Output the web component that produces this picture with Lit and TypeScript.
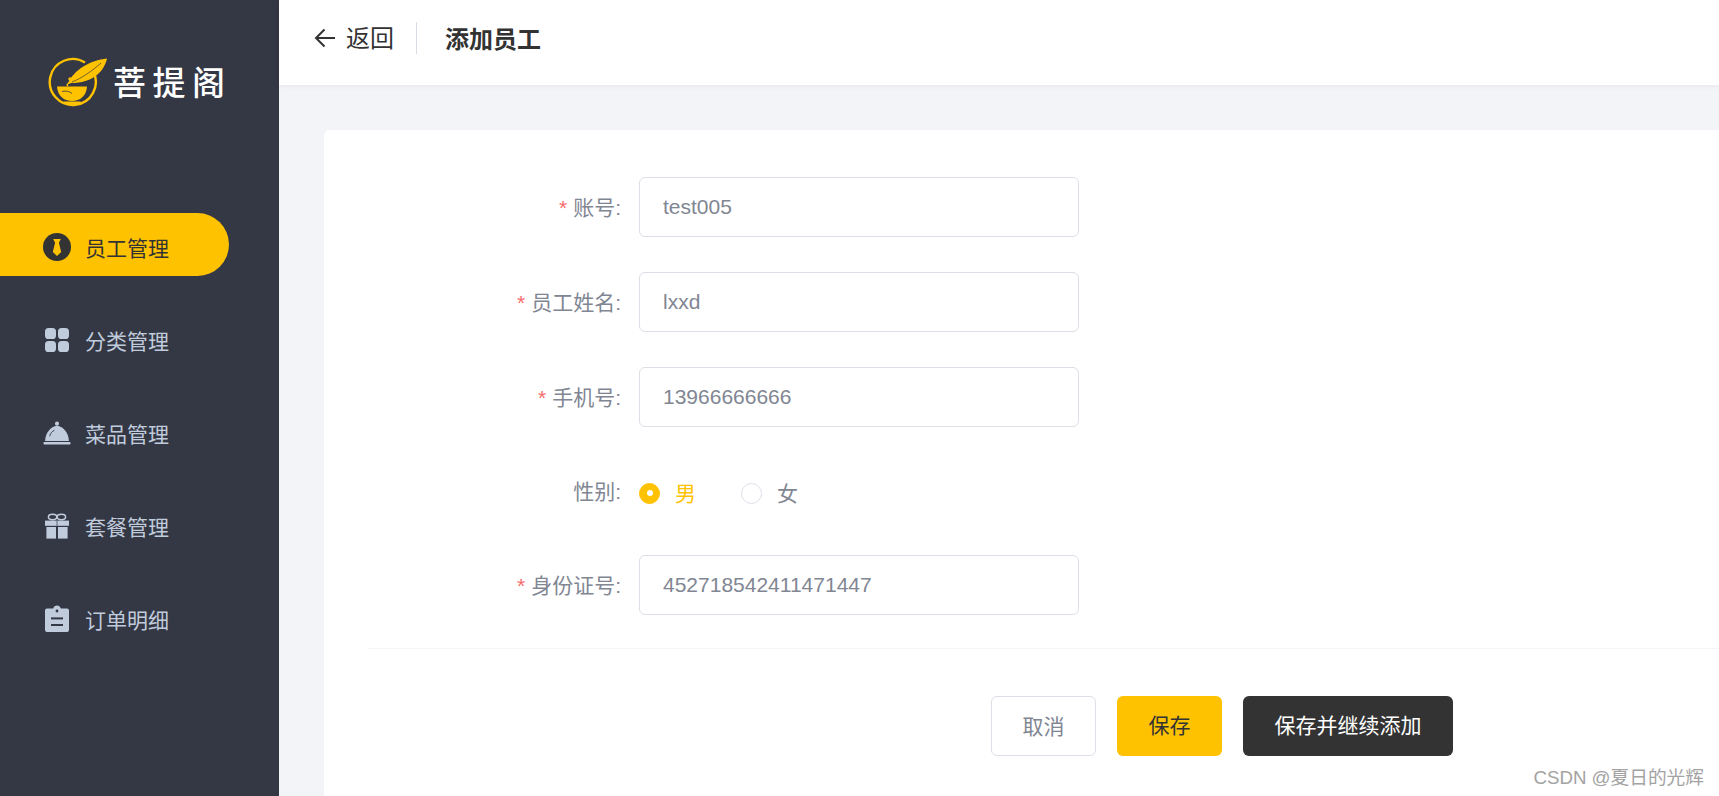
import { LitElement, html, css, svg } from "lit";
import { customElement } from "lit/decorators.js";

const Y = "#ffc200";

const ICONS: Record<string, unknown> = {
  tie: svg`<svg width="28" height="28" viewBox="0 0 28 28"><circle cx="14" cy="14" r="14" fill="#333"/><path d="M10.2 6h7.6l-1.9 3.8 2.3 9.2-4.2 4-4.2-4 2.3-9.2z" fill="${Y}"/></svg>`,
  grid: svg`<svg width="28" height="28" viewBox="0 0 28 28" fill="#c0ccdc"><rect x="2" y="2" width="11" height="11" rx="3.6"/><rect x="15" y="2" width="11" height="11" rx="3.6"/><rect x="2" y="15" width="11" height="11" rx="3.6"/><rect x="15" y="15" width="11" height="11" rx="3.6"/></svg>`,
  cloche: svg`<svg width="30" height="28" viewBox="0 0 30 28" fill="#c0ccdc"><circle cx="15" cy="4" r="2.2"/><path d="M2.2 22.5C2.6 14 8 7 15 6.2 22 7 27.4 14 27.8 22.5z"/><rect x="0.5" y="23.6" width="29" height="2.6" rx="1"/><path d="M7.2 17.5c.6-3 2.6-5.4 5-6.4" fill="none" stroke="#343744" stroke-width="1"/></svg>`,
  gift: svg`<svg width="28" height="28" viewBox="0 0 28 28"><g fill="#c0ccdc"><rect x="2" y="8.6" width="24" height="5.2"/><rect x="3.4" y="15" width="9.6" height="11.6"/><rect x="15" y="15" width="9.6" height="11.6"/><rect x="13" y="8.6" width="2" height="5.2" fill="#343744" opacity=".35"/></g><g fill="none" stroke="#c0ccdc" stroke-width="1.5"><ellipse cx="9.6" cy="5" rx="4.2" ry="2.7"/><ellipse cx="18.4" cy="5" rx="4.2" ry="2.7"/></g></svg>`,
  clip: svg`<svg width="28" height="28" viewBox="0 0 28 28"><path d="M4 3.6h6.2C10.8 1.6 12.2.4 14 .4s3.2 1.2 3.8 3.2H24a2 2 0 0 1 2 2V25a2 2 0 0 1-2 2H4a2 2 0 0 1-2-2V5.600a2 2 0 0 1 2-2z" fill="#c0ccdc"/><circle cx="14" cy="6" r="1.400" fill="#343744"/><rect x="8" y="12.400" width="12" height="2" fill="#343744"/><rect x="8" y="19" width="12" height="2" fill="#343744"/></svg>`,
};

const NAV = [
  { icon: "tie", text: "员工管理", active: true },
  { icon: "grid", text: "分类管理" },
  { icon: "cloche", text: "菜品管理" },
  { icon: "gift", text: "套餐管理" },
  { icon: "clip", text: "订单明细" },
];

@customElement("app-root")
export class AppRoot extends LitElement {
  static styles = css`
    :host {
      display: block;
      position: relative;
      width: 1719px;
      height: 796px;
      overflow: hidden;
      font-family: "Liberation Sans", "Noto Sans CJK SC", sans-serif;
      font-size: 21px;
      color: #333;
    }
    .app {
      display: grid;
      grid-template-columns: 279px 1fr;
      height: 796px;
      background: #f3f4f7;
    }
    .side {
      background: #343744;
      display: flex;
      flex-direction: column;
    }
    .brand {
      display: flex;
      gap: 5px;
      padding: 57px 0 0 48px;
      height: 156px;
      box-sizing: border-box;
      align-items: flex-start;
    }
    .brand svg {
      display: block;
    }
    .brand-name {
      color: #fff;
      font-size: 33px;
      line-height: 48px;
      letter-spacing: 6.5px;
      font-weight: 500;
      font-family: "Noto Sans CJK SC", sans-serif;
      white-space: nowrap;
    }
    nav {
      display: flex;
      flex-direction: column;
      gap: 30px;
      margin-top: 57px;
    }
    .item {
      display: flex;
      align-items: center;
      gap: 14px;
      height: 63px;
      width: 229px;
      padding: 4px 0 0 43px;
      box-sizing: border-box;
      color: #c0ccdc;
      border-radius: 0 32px 32px 0;
    }
    .item.on {
      background: #ffc200;
      color: #333;
    }
    .ic {
      width: 28px;
      display: flex;
      justify-content: center;
    }
    .ic svg {
      display: block;
    }
    .main {
      display: flex;
      flex-direction: column;
      min-width: 0;
    }
    .top {
      height: 85px;
      box-sizing: border-box;
      background: #fff;
      box-shadow: 0 1px 5px rgba(0, 0, 0, 0.06);
      display: flex;
      align-items: center;
      padding: 0 0 10px 35px;
      flex: none;
      position: relative;
    }
    .back {
      display: flex;
      align-items: center;
      gap: 10px;
      font-size: 24px;
      color: #333;
    }
    .back svg {
      display: block;
    }
    .back-text {
      margin-top: -3px;
    }
    .sep {
      width: 1px;
      height: 32px;
      background: #d8dde3;
      margin: 0 28px 0 22px;
    }
    .title {
      font-size: 24px;
      font-weight: 700;
      color: #333;
    }
    .body {
      flex: 1;
      padding: 45px 0 0 45px;
      min-height: 0;
    }
    .card {
      background: #fff;
      border-radius: 6px 0 0 0;
      height: 100%;
      margin-right: -20px;
      padding: 47px 0 0 44px;
      box-sizing: border-box;
    }
    .form {
      display: grid;
      grid-template-columns: 253px 440px;
      column-gap: 18px;
      row-gap: 35px;
      align-items: center;
    }
    .label {
      text-align: right;
      color: #818693;
      white-space: nowrap;
      padding-bottom: 3px;
    }
    .star {
      color: #f56c6c;
      margin-right: 6px;
    }
    .field {
      height: 60px;
      box-sizing: border-box;
      border: 1.5px solid #dcdfe6;
      border-radius: 6px;
      padding: 0 23px;
      display: flex;
      align-items: center;
      color: #818693;
    }
    .radios {
      display: flex;
      align-items: center;
      height: 58px;
      padding-top: 4px;
      box-sizing: border-box;
    }
    .radio {
      display: flex;
      align-items: center;
      gap: 15px;
      color: #818693;
      margin-right: 45px;
    }
    .radio-text {
      margin-top: -3px;
    }
    .radio.on {
      color: #ffc200;
    }
    .dot {
      width: 21px;
      height: 21px;
      border-radius: 50%;
      box-sizing: border-box;
      border: 1.5px solid #dcdfe6;
      background: #fff;
      display: flex;
      align-items: center;
      justify-content: center;
    }
    .radio.on .dot {
      background: #ffc200;
      border-color: #ffc200;
    }
    .radio.on .dot::after {
      content: "";
      width: 6px;
      height: 6px;
      border-radius: 50%;
      background: #fff;
    }
    .rule {
      height: 1px;
      background: #f3f4f7;
      margin-top: 33px;
    }
    .actions {
      display: flex;
      gap: 21px;
      padding: 47px 0 0 623px;
    }
    .btn {
      height: 60px;
      box-sizing: border-box;
      padding: 0 31.5px 4px;
      border-radius: 6px;
      display: flex;
      align-items: center;
      white-space: nowrap;
    }
    .btn.plain {
      border: 1.5px solid #dcdfe6;
      color: #818693;
      background: #fff;
      padding: 0 30.5px 3px;
    }
    .btn.primary {
      background: #ffc200;
      color: #333;
    }
    .btn.dark {
      background: #333;
      color: #fff;
    }
    .mark {
      position: absolute;
      right: 15px;
      bottom: 7px;
      font-size: 18.7px;
      color: #a3a3a3;
      white-space: nowrap;
      line-height: 22px;
    }
  `;

  private row(label: string, value: string, required = true) {
    return html`<div class="label">
        ${required ? html`<span class="star">*</span>` : ""}${label}:
      </div>
      <div class="field">${value}</div>`;
  }

  render() {
    return html`<div class="app">
        <aside class="side">
          <div class="brand">
            <svg width="60" height="50" viewBox="0 0 60 50">
              <path
                d="M37 5.500A23 23 0 1 0 45.500 15"
                fill="none"
                stroke="${Y}"
                stroke-width="2.400"
              />
              <path d="M20 26C26 13 42 3 59 1.500 56 15 44 27 20 26z" fill="${Y}" />
              <path d="M24 25C34 21 44 14 53 6" fill="none" stroke="#343744" stroke-width=".7" />
              <path
                d="M20 29c-4-3 7-3 2-6-2-1-1-2 1-2"
                fill="none"
                stroke="${Y}"
                stroke-width="1.300"
              />
              <path d="M9 29.500h30C38.500 39 32 44 24 44S9.500 39 9 29.500z" fill="${Y}" />
              <rect x="15" y="44.500" width="18" height="2.500" rx="1" fill="${Y}" />
              <path d="M14 34.500c4-1 8 0 10 2" fill="none" stroke="#343744" stroke-width=".8" />
            </svg>
            <span class="brand-name">菩提阁</span>
          </div>
          <nav>
            ${NAV.map(
              (n) => html`<div class="item ${n.active ? "on" : ""}">
                <span class="ic">${ICONS[n.icon]}</span><span>${n.text}</span>
              </div>`
            )}
          </nav>
        </aside>
        <div class="main">
          <header class="top">
            <div class="back">
              <svg width="22" height="22" viewBox="0 0 22 22" fill="none" stroke="#333" stroke-width="2">
                <path d="M21 11H2M10.500 2.500 2 11l8.500 8.500" />
              </svg>
              <span class="back-text">返回</span>
            </div>
            <span class="sep"></span>
            <span class="title">添加员工</span>
          </header>
          <div class="body">
            <section class="card">
              <div class="form">
                ${this.row("账号", "test005")} ${this.row("员工姓名", "lxxd")}
                ${this.row("手机号", "13966666666")}
                <div class="label">性别:</div>
                <div class="radios">
                  <span class="radio on"><span class="dot"></span><span class="radio-text">男</span></span>
                  <span class="radio"><span class="dot"></span><span class="radio-text">女</span></span>
                </div>
                ${this.row("身份证号", "452718542411471447")}
              </div>
              <div class="rule"></div>
              <div class="actions">
                <div class="btn plain">取消</div>
                <div class="btn primary">保存</div>
                <div class="btn dark">保存并继续添加</div>
              </div>
            </section>
          </div>
        </div>
      </div>
      <div class="mark">CSDN @夏日的光辉</div>`;
  }
}
